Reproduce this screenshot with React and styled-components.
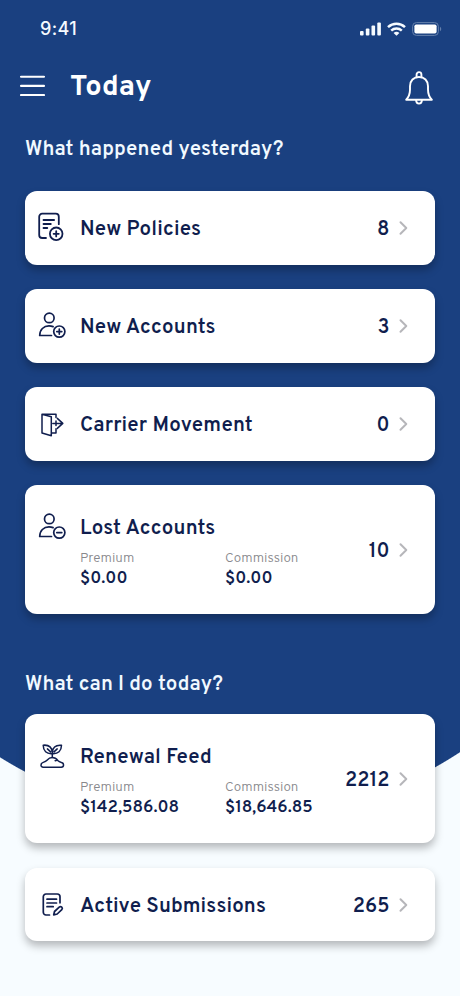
import React from 'react';
import styled, { createGlobalStyle } from 'styled-components';

const BLUE = '#1a4080';
const NAVY = '#101e4e';

const GlobalStyle = createGlobalStyle`
  * { box-sizing: border-box; }
  body { margin: 0; background: #f7fcff; font-family: Overpass, Roboto, sans-serif; }
`;

const Screen = styled.main`
  width: 460px;
  height: 996px;
  overflow: hidden;
  background:
    linear-gradient(${BLUE}, ${BLUE}) 0 0 / 100% 395px no-repeat,
    radial-gradient(circle at 226px 395px, ${BLUE} 426.5px, transparent 427.5px),
    #f7fcff;
`;

const StatusBar = styled.div`
  display: flex;
  align-items: center;
  justify-content: space-between;
  height: 57px;
  padding: 0 18px 0 40px;
  color: #f6fbff;
`;

const Time = styled.time`
  font: 500 18px/20px Inter, sans-serif;
  letter-spacing: 0.4px;
`;

const Header = styled.header`
  display: flex;
  align-items: center;
  height: 62px;
  padding: 0 27.5px 0 20px;
  color: #fff;
`;

const IconButton = styled.button`
  display: flex;
  padding: 0;
  border: 0;
  background: none;
  color: inherit;
`;

const MenuButton = styled(IconButton)`
  margin-bottom: 4px;
`;

const Title = styled.h1`
  flex: 1;
  margin: 0 0 0 25px;
  font-size: 29px;
  line-height: 36px;
  font-weight: 700;
  letter-spacing: 0.2px;
`;

const Section = styled.section`
  padding: 0 25px;
  margin-top: ${(p) => p.$top}px;
`;

const SectionTitle = styled.h2`
  margin: 0 0 ${(p) => p.$gap}px;
  font-size: 20.5px;
  line-height: 24px;
  font-weight: 600;
  letter-spacing: 0.1px;
  white-space: nowrap;
  color: #f1f9ff;
`;

const CardList = styled.div`
  display: flex;
  flex-direction: column;
  gap: 24.5px;
`;

const Card = styled.article`
  display: flex;
  align-items: center;
  height: ${(p) => (p.$tall ? 129 : 73.6)}px;
  padding: 0 27px 0 11px;
  border-radius: 12px;
  background: #fff;
  color: ${NAVY};
  box-shadow: 0 5px 8px rgba(0, 0, 0, 0.27);
`;

const CardBody = styled.div`
  flex: 1;
`;

const CardHead = styled.div`
  display: flex;
  align-items: center;
  gap: 12px;
  height: 32px;
`;

const CardTitle = styled.h3`
  margin: 0;
  padding-top: 4px;
  font-size: 20.5px;
  line-height: 26px;
  font-weight: 600;
  letter-spacing: 0.15px;
  white-space: nowrap;
`;

const Figures = styled.dl`
  display: grid;
  grid-template-columns: 145px 110px;
  margin: 2px 0 0 44px;
`;

const FigureLabel = styled.dt`
  padding-top: 4px;
  font-size: 13.5px;
  line-height: 20px;
  font-weight: 300;
  color: #88888c;
`;

const FigureValue = styled.dd`
  margin: 0;
  font-size: 17px;
  line-height: 20px;
  font-weight: 600;
`;

const Count = styled.span`
  margin-right: 9.5px;
  padding-top: 4px;
  font-size: 20px;
  line-height: 26px;
  font-weight: 600;
`;

const Glyph = styled.svg`
  display: block;
  flex: none;
  fill: none;
  stroke: currentColor;
  stroke-width: ${(p) => p.$weight || 1.8};
  stroke-linecap: round;
  stroke-linejoin: round;
`;

const Indicators = styled.div`
  display: flex;
  align-items: center;
  gap: 6px;
`;

const CardIcon = ({ children, weight }) => (
  <Glyph width="32" height="32" viewBox="0 0 32 32" $weight={weight}>{children}</Glyph>
);

const PolicyIcon = () => (
  <CardIcon weight={1.8}>
    <path d="M10 26H6.200a3 3 0 0 1-3-3V4.700a3 3 0 0 1 3-3h13.600a3 3 0 0 1 3 3v7.500M7.500 8h10.600M7.500 12h7.300M7.500 16h3.800" />
    <circle cx="20.200" cy="21.800" r="6.300" />
    <path d="M20.200 19.200v5.200M17.600 21.800h5.200" />
  </CardIcon>
);

const PersonIcon = ({ plus }) => (
  <CardIcon weight={1.7}>
    <circle cx="13.300" cy="7.900" r="4.800" />
    <path d="M15.500 25.500H3.700c0-5.800 4-9.700 9.300-9.700 1.700 0 2.900.3 4.100.8" />
    <circle cx="23.300" cy="21.600" r="5.600" />
    <path d={plus ? 'M20.800 21.600h5M23.300 19.100v5' : 'M20.800 21.600h5'} />
  </CardIcon>
);

const DoorIcon = () => (
  <CardIcon weight={1.5}>
    <path d="M6 6.200 15.300 8.800V27.800L6 25ZM6 6.200h14v3.400M15.300 25H20v-4.200" />
    <path d="M16.800 15.400h9.800M21.300 10.400l5.500 5-5.500 5M20 13v4.600" />
  </CardIcon>
);

const SproutIcon = () => (
  <CardIcon weight={1.5}>
    <path d="M16.300 17.500v-5.200M16.300 13.600C10.500 14.100 7.300 11 7.200 5.200c5.300-.5 8.600 2.100 9.100 6.900.5-4.800 3.800-7.400 9.200-6.900-.1 5.800-3.400 8.900-9.200 8.400M14.600 11.900l-3.200-3M18 11.900l3.200-3" />
    <path d="M7.200 27.200h18c3.200 0 3-4.200.3-4.800-1.600-.4-2.600-.7-3.700-2-1.400-1.800-3.300-2.900-5.500-2.900-2.300 0-3.900 1.100-5.300 2.700-1.200 1.400-2.200 1.700-3.800 2.200-2.900.9-3 4.800 0 4.800ZM19.200 20.700c.9-.4 1.800-.4 2.600-.3" />
  </CardIcon>
);

const SubmissionIcon = () => (
  <CardIcon weight={1.7}>
    <path d="M13.500 26H10a2.700 2.700 0 0 1-2.700-2.700V7.700A2.700 2.700 0 0 1 10 5h11.300A2.700 2.700 0 0 1 24 7.700v6.100M11 10.200h9.500M11 14h9.500M11 17.700h6.200" />
    <path d="m17.700 25.900.8-3.400 4.700-4.300c1.800-1.500 4.100.7 2.600 2.500L21.200 25Z" />
  </CardIcon>
);

const Chevron = () => (
  <Glyph width="9" height="16" viewBox="0 0 9 16" $weight={2} color="#b6b6ba">
    <path d="m1.500 2.300 5.800 5.700-5.800 5.700" />
  </Glyph>
);

const SignalIcon = () => (
  <svg width="21" height="14" viewBox="0 0 21 14" fill="currentColor">
    <rect y="9" width="3.600" height="4.500" rx="1" />
    <rect x="5.800" y="6.500" width="3.600" height="7" rx="1" />
    <rect x="11.500" y="3.500" width="3.600" height="10" rx="1" />
    <rect x="17.300" y=".4" width="3.600" height="13.100" rx="1" />
  </svg>
);

const WifiIcon = () => (
  <Glyph width="19" height="14" viewBox="0 0 19 14" $weight={2.5}>
    <path strokeLinecap="butt" d="M1 5.200c4.900-4.500 12.100-4.500 17 0M4.200 8.600c3-2.700 7.600-2.700 10.600 0" />
    <path fill="currentColor" stroke="none" d="M6.600 10.900c1.700-1.500 4.100-1.500 5.800 0l-2.900 2.900Z" />
  </Glyph>
);

const BatteryIcon = () => (
  <svg width="30" height="14" viewBox="0 0 30 14">
    <rect x=".6" y=".6" width="25.800" height="12.800" rx="3.800" fill="none" stroke="#6580ac" />
    <rect x="2.400" y="2.400" width="22.200" height="9.200" rx="1.800" fill="#fff" />
    <path d="M28 4.800c1.700.7 1.700 3.700 0 4.400Z" fill="#6580ac" />
  </svg>
);

const MenuIcon = () => (
  <Glyph width="25" height="22" viewBox="0 0 25 22" $weight={2.1}>
    <path d="M1 1.700h23M1 10.900h23M1 20h23" />
  </Glyph>
);

const BellIcon = () => (
  <Glyph width="28" height="34" viewBox="0 0 28 34" $weight={1.9}>
    <path d="M11.600 6.300V3.500a2.400 2.400 0 0 1 4.800 0v2.800" />
    <path d="M1.200 28.700c2.800-2.900 3.800-5.800 3.800-10.200v-3.300C5 9.700 8.600 6 14 6s9 3.700 9 9.200v3.300c0 4.400 1 7.300 3.800 10.200Z" />
    <path d="M11.100 29.200c.2 4.500 5.600 4.500 5.800 0" />
  </Glyph>
);

const yesterday = [
  { title: 'New Policies', count: '8', icon: <PolicyIcon /> },
  { title: 'New Accounts', count: '3', icon: <PersonIcon plus /> },
  { title: 'Carrier Movement', count: '0', icon: <DoorIcon /> },
  {
    title: 'Lost Accounts', count: '10', icon: <PersonIcon />,
    figures: [['Premium', '$0.00'], ['Commission', '$0.00']],
  },
];

const today = [
  {
    title: 'Renewal Feed', count: '2212', icon: <SproutIcon />,
    figures: [['Premium', '$142,586.08'], ['Commission', '$18,646.85']],
  },
  { title: 'Active Submissions', count: '265', icon: <SubmissionIcon /> },
];

const SummaryCard = ({ title, count, icon, figures }) => (
  <Card $tall={Boolean(figures)}>
    <CardBody>
      <CardHead>
        {icon}
        <CardTitle>{title}</CardTitle>
      </CardHead>
      {figures && (
        <Figures>
          {figures.map(([label, value]) => (
            <div key={label}>
              <FigureLabel>{label}</FigureLabel>
              <FigureValue>{value}</FigureValue>
            </div>
          ))}
        </Figures>
      )}
    </CardBody>
    <Count>{count}</Count>
    <Chevron />
  </Card>
);

export default function App() {
  return (
    <Screen>
      <GlobalStyle />
      <StatusBar>
        <Time>9:41</Time>
        <Indicators>
          <SignalIcon />
          <WifiIcon />
          <BatteryIcon />
        </Indicators>
      </StatusBar>
      <Header>
        <MenuButton aria-label="Menu"><MenuIcon /></MenuButton>
        <Title>Today</Title>
        <IconButton aria-label="Notifications"><BellIcon /></IconButton>
      </Header>
      <Section $top={19}>
        <SectionTitle $gap={29}>What happened yesterday?</SectionTitle>
        <CardList>
          {yesterday.map((item) => <SummaryCard key={item.title} {...item} />)}
        </CardList>
      </Section>
      <Section $top={59}>
        <SectionTitle $gap={17}>What can I do today?</SectionTitle>
        <CardList>
          {today.map((item) => <SummaryCard key={item.title} {...item} />)}
        </CardList>
      </Section>
    </Screen>
  );
}
